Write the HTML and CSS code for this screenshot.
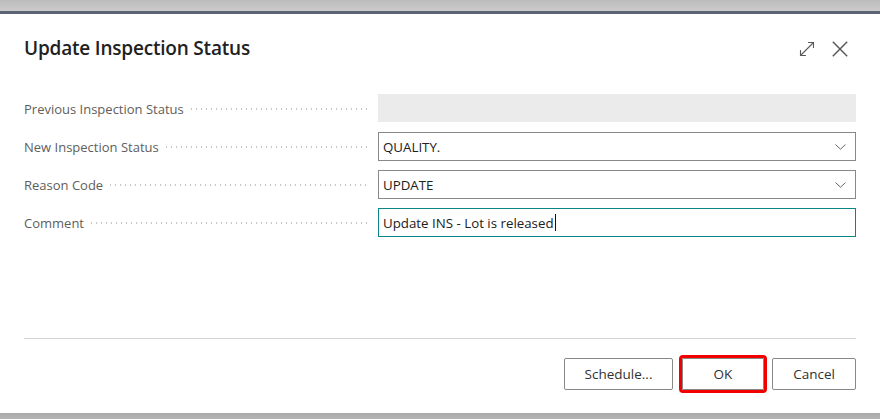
FILE: index.html
```html
<!DOCTYPE html>
<html>
<head>
  <title>Update Inspection Status</title>
  <link rel="stylesheet" href="styles.css">
</head>
<body>

  <div class="dialog">
    <div class="dialog-head">
      <h1 class="dialog-title">Update Inspection Status</h1>
      <div class="head-tools">
        <!-- expand -->
        <svg class="tool-icon" width="16" height="16" viewBox="0 0 16 16">
          <path d="M1.5 14.5 L14.5 1.5 M9 1.5 H14.5 V7 M1.5 9 V14.5 H7" fill="none" stroke="#5a5a5a" stroke-width="1.1"/>
        </svg>
        <!-- close -->
        <svg class="tool-icon" width="16" height="16" viewBox="0 0 16 16">
          <path d="M0.8 0.8 L15.2 15.2 M15.2 0.8 L0.8 15.2" fill="none" stroke="#5a5a5a" stroke-width="1.5"/>
        </svg>
      </div>
    </div>

    <div class="dialog-body">
      <div class="field">
        <div class="field-label"><span>Previous Inspection Status</span><i class="leader"></i></div>
        <div class="field-value readonly"></div>
      </div>
      <div class="field">
        <div class="field-label"><span>New Inspection Status</span><i class="leader"></i></div>
        <div class="field-value select">
          <span>QUALITY.</span>
          <svg class="chevron" width="11" height="6" viewBox="0 0 11 6"><path d="M0.5 0.5 L5.5 5.2 L10.5 0.5" fill="none" stroke="#666" stroke-width="1"/></svg>
        </div>
      </div>
      <div class="field">
        <div class="field-label"><span>Reason Code</span><i class="leader"></i></div>
        <div class="field-value select">
          <span>UPDATE</span>
          <svg class="chevron" width="11" height="6" viewBox="0 0 11 6"><path d="M0.5 0.5 L5.5 5.2 L10.5 0.5" fill="none" stroke="#666" stroke-width="1"/></svg>
        </div>
      </div>
      <div class="field">
        <div class="field-label"><span>Comment</span><i class="leader"></i></div>
        <div class="field-value focused"><span>Update INS - Lot is released</span><i class="caret"></i></div>
      </div>
    </div>

    <div class="dialog-foot">
      <button class="btn btn-wide">Schedule...</button>
      <button class="btn btn-ok">OK</button>
      <button class="btn">Cancel</button>
    </div>
  </div>

</body>
</html>
```

FILE: styles.css
```css
html, body {
    margin: 0;
    height: 100%;
}

body {
    background: linear-gradient(#bcbcbc, #cacaca 11px, #a6a6a6 411px, #b4b4b4);
    font-family: "Open Sans", "Noto Sans", sans-serif;
    overflow: hidden;
}

.dialog {
    margin-top: 11px;
    height: 402px;
    box-sizing: border-box;
    border-top: 3px solid #5c6373;
    background: #fff;
    padding: 0 24px;
    display: flex;
    flex-direction: column;
}

/* header */
.dialog-head {
    display: flex;
    align-items: center;
    height: 64px;
    padding-top: 2px;
}

.dialog-title {
    margin: 0;
    flex: 1;
    font-size: 19px;
    font-weight: 600;
    color: #212121;
    letter-spacing: -0.2px;
}

.head-tools {
    display: flex;
    gap: 17px;
    margin-right: 8px;
    padding-top: 1px;
}

.tool-icon {
    display: block;
}

/* fields */
.dialog-body {
    flex: 1;
    display: flex;
    flex-direction: column;
    gap: 9px;
    padding-top: 14px;
}

.field {
    display: grid;
    grid-template-columns: 354px 1fr;
    height: 29px;
}

.field-label {
    display: flex;
    align-items: center;
    font-size: 13px;
    color: #605e5c;
    padding-right: 9px;
    white-space: nowrap;
}

.leader {
    flex: 1;
    height: 1.5px;
    margin-left: 7px;
    margin-top: 1px;
    background: repeating-linear-gradient(to right, #c4c4c4 0 1px, transparent 1px 5px);
}

.field-value {
    display: flex;
    align-items: center;
    box-sizing: border-box;
    border: 1px solid #8a8886;
    padding: 0 9px 0 4px;
    font-size: 13.3px;
    color: #212121;
}

.field-value.readonly {
    border-color: #ebebeb;
    background: #ebebeb;
    height: 28px;
}

.field-value.focused {
    border-color: #0b8588;
}

.select span {
    flex: 1;
}

.chevron {
    display: block;
}

.caret {
    width: 1px;
    height: 17px;
    background: #111;
    margin-left: 1px;
}

/* footer buttons */
.dialog-foot {
    display: flex;
    justify-content: flex-end;
    gap: 8px;
    border-top: 1px solid #d2d2d2;
    padding: 19px 0 23px;
}

.btn {
    height: 32px;
    min-width: 84px;
    padding: 0 16px;
    background: #fff;
    border: 1px solid #8a8886;
    border-radius: 2px;
    font-family: inherit;
    font-size: 13.5px;
    color: #323130;
}

.btn-wide {
    min-width: 109px;
}

.btn-ok {
    min-width: 82px;
    margin-left: 1px;
    outline: 3px solid #f20000;
    outline-offset: 0;
    border-radius: 1px;
}
```
